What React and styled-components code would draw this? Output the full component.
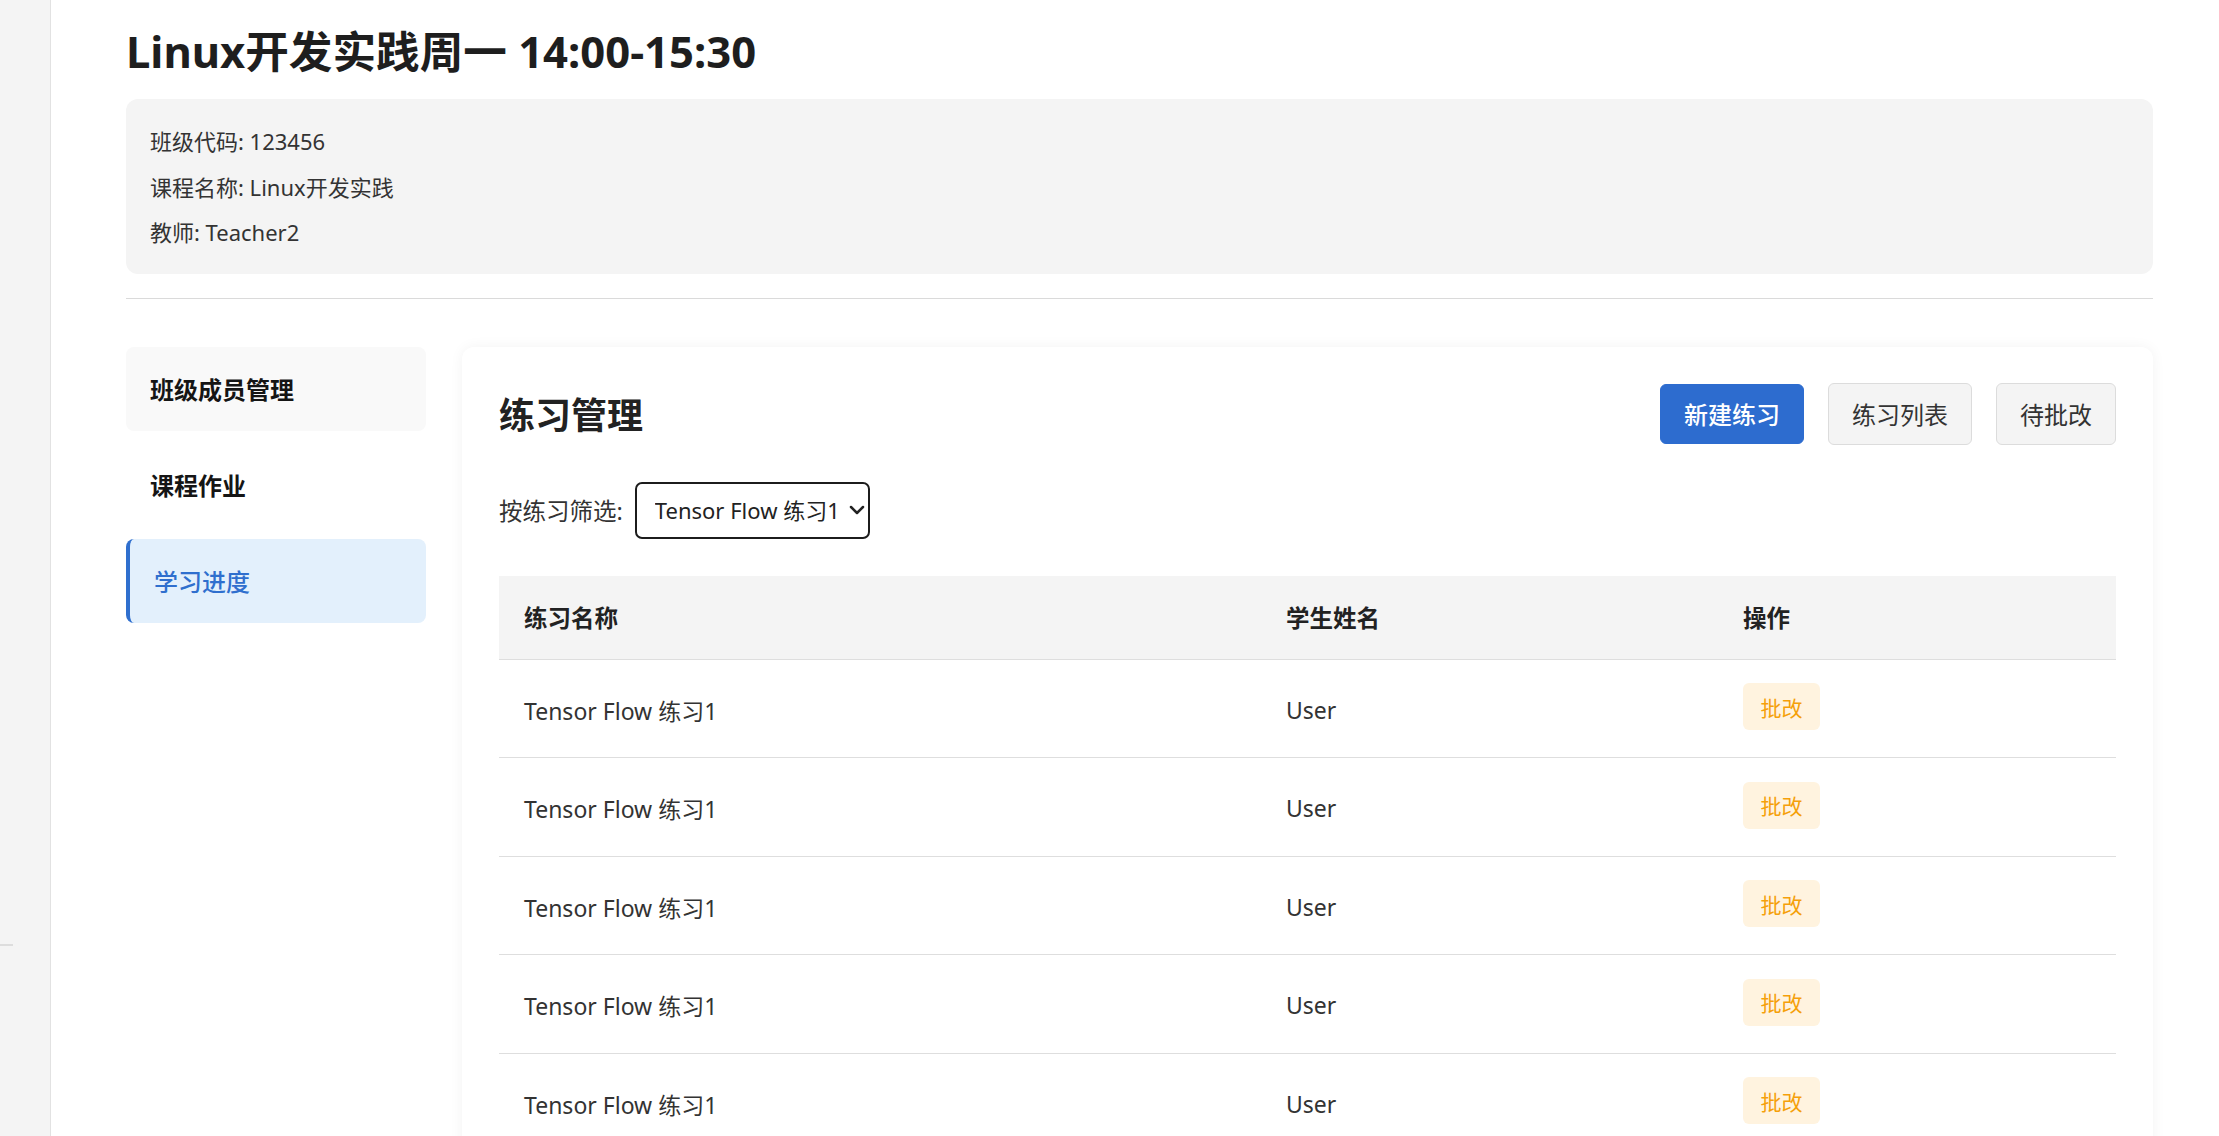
import React, { useState } from 'react';
import styled, { createGlobalStyle } from 'styled-components';
import { ChevronDown } from 'lucide-react';

const GlobalStyle = createGlobalStyle`
  html, body {
    margin: 0;
    padding: 0;
    overflow: hidden;
    background: #fff;
    font-family: "Noto Sans", "Noto Sans CJK SC", sans-serif;
    color: #222;
  }
  * { box-sizing: border-box; }
`;

const Page = styled.div`
  display: flex;
  height: 100vh;
  overflow: hidden;
`;

const SideStrip = styled.aside`
  width: 51px;
  flex-shrink: 0;
  background: #f4f4f4;
  border-right: 1px solid #e2e2e2;
  padding-top: 944px;
`;

const StripMark = styled.div`
  width: 13px;
  height: 2px;
  background: #dddddd;
`;

const Main = styled.main`
  flex: 1;
  padding: 25px 66px 0 75px;
  min-width: 0;
`;

const Title = styled.h1`
  margin: 0;
  font-size: 43.6px;
  line-height: 52px;
  font-weight: 700;
  color: #1e1e1e;
`;

const InfoBox = styled.div`
  margin-top: 22px;
  background: #f4f4f4;
  border-radius: 12px;
  padding: 20px 24px 18px;
`;

const InfoLine = styled.p`
  margin: 0;
  font-size: 22px;
  line-height: 45.5px;
  color: #333;
`;

const Divider = styled.hr`
  margin: 24px 0 0;
  border: none;
  border-top: 1px solid #dadada;
`;

const Body = styled.div`
  display: flex;
  align-items: flex-start;
  gap: 36px;
  margin-top: 48px;
`;

const Nav = styled.nav`
  width: 300px;
  flex-shrink: 0;
  display: flex;
  flex-direction: column;
  gap: 12px;
`;

const NavItem = styled.div`
  height: 84px;
  display: flex;
  align-items: center;
  padding-left: 24px;
  border-radius: 8px;
  font-size: 24px;
  cursor: pointer;
  background: ${p => (p.$active ? '#e3f0fc' : p.$hover ? '#f9f9f9' : 'transparent')};
  color: ${p => (p.$active ? '#2f6fce' : '#151515')};
  font-weight: ${p => (p.$active ? 500 : 700)};
  border-left: ${p => (p.$active ? '4px solid #2f6fce' : 'none')};
`;

const Card = styled.section`
  flex: 1;
  min-width: 0;
  background: #fff;
  border-radius: 12px;
  box-shadow: 0 0 14px rgba(0, 0, 0, 0.05);
  padding: 37px 37px 40px;
`;

const CardHeader = styled.div`
  display: flex;
  align-items: center;
  justify-content: space-between;
  height: 60px;
`;

const CardTitle = styled.h2`
  margin: 0;
  font-size: 36px;
  font-weight: 700;
  color: #222;
`;

const Actions = styled.div`
  display: flex;
  align-items: center;
  gap: 24px;
`;

const Button = styled.button`
  height: ${p => (p.$primary ? '60px' : '62px')};
  padding: 0 23px;
  border-radius: 6px;
  font-family: inherit;
  font-size: 24px;
  cursor: pointer;
  border: 1px solid ${p => (p.$primary ? '#2d6ccf' : '#dcdcdc')};
  background: ${p => (p.$primary ? '#2d6ccf' : '#f4f4f4')};
  color: ${p => (p.$primary ? '#fff' : '#333')};
  font-weight: ${p => (p.$primary ? 500 : 400)};
`;

const FilterRow = styled.div`
  display: flex;
  align-items: center;
  gap: 12px;
  margin-top: 38px;
  font-size: 23.5px;
  color: #333;
`;

const SelectWrap = styled.div`
  position: relative;
  width: 235px;
  height: 57px;
`;

const Select = styled.select`
  appearance: none;
  width: 100%;
  height: 100%;
  border: 2px solid #1c1c1c;
  border-radius: 7px;
  background: #fff;
  padding: 0 28px 0 18px;
  font-family: inherit;
  font-size: 22px;
  color: #222;
`;

const Chevron = styled(ChevronDown)`
  position: absolute;
  right: 1px;
  top: 50%;
  transform: translateY(-50%);
  pointer-events: none;
  color: #222;
`;

const Table = styled.div`
  margin-top: 37px;
`;

const Row = styled.div`
  display: grid;
  grid-template-columns: 762px 457px 1fr;
  align-items: center;
  height: ${p => (p.$head ? '84px' : '98.5px')};
  background: ${p => (p.$head ? '#f4f4f4' : '#fff')};
  border-bottom: 1px solid #dedede;
`;

const Cell = styled.div`
  padding-left: 25px;
  font-size: ${p => (p.$head ? '23.5px' : '23px')};
  color: ${p => (p.$head ? '#222' : '#333')};
  font-weight: ${p => (p.$head ? 700 : 400)};
  padding-top: ${p => (p.$head ? 0 : '3px')};
`;

const GradeButton = styled.button`
  width: 77px;
  height: 47px;
  margin-top: -6px;
  border: none;
  border-radius: 6px;
  background: #fff3df;
  color: #f5a00a;
  font-family: inherit;
  font-size: 21px;
  cursor: pointer;
`;

const submissions = Array.from({ length: 5 }, (_, i) => ({
  id: i,
  exercise: 'Tensor Flow 练习1',
  student: 'User',
}));

export default function App() {
  const [tab, setTab] = useState('progress');
  const [exercise, setExercise] = useState('tf1');

  return (
    <Page>
      <GlobalStyle />
      <SideStrip>
        <StripMark />
      </SideStrip>
      <Main>
        <Title>Linux开发实践周一 14:00-15:30</Title>
        <InfoBox>
          <InfoLine>班级代码: 123456</InfoLine>
          <InfoLine>课程名称: Linux开发实践</InfoLine>
          <InfoLine>教师: Teacher2</InfoLine>
        </InfoBox>
        <Divider />
        <Body>
          <Nav>
            <NavItem $hover onClick={() => setTab('members')} $active={tab === 'members'}>
              班级成员管理
            </NavItem>
            <NavItem onClick={() => setTab('homework')} $active={tab === 'homework'}>
              课程作业
            </NavItem>
            <NavItem onClick={() => setTab('progress')} $active={tab === 'progress'}>
              学习进度
            </NavItem>
          </Nav>
          <Card>
            <CardHeader>
              <CardTitle>练习管理</CardTitle>
              <Actions>
                <Button $primary>新建练习</Button>
                <Button>练习列表</Button>
                <Button>待批改</Button>
              </Actions>
            </CardHeader>
            <FilterRow>
              <span>按练习筛选:</span>
              <SelectWrap>
                <Select value={exercise} onChange={e => setExercise(e.target.value)}>
                  <option value="tf1">Tensor Flow 练习1</option>
                </Select>
                <Chevron size={24} strokeWidth={2.5} />
              </SelectWrap>
            </FilterRow>
            <Table>
              <Row $head>
                <Cell $head>练习名称</Cell>
                <Cell $head>学生姓名</Cell>
                <Cell $head>操作</Cell>
              </Row>
              {submissions.map(s => (
                <Row key={s.id}>
                  <Cell>{s.exercise}</Cell>
                  <Cell>{s.student}</Cell>
                  <Cell>
                    <GradeButton>批改</GradeButton>
                  </Cell>
                </Row>
              ))}
            </Table>
          </Card>
        </Body>
      </Main>
    </Page>
  );
}
